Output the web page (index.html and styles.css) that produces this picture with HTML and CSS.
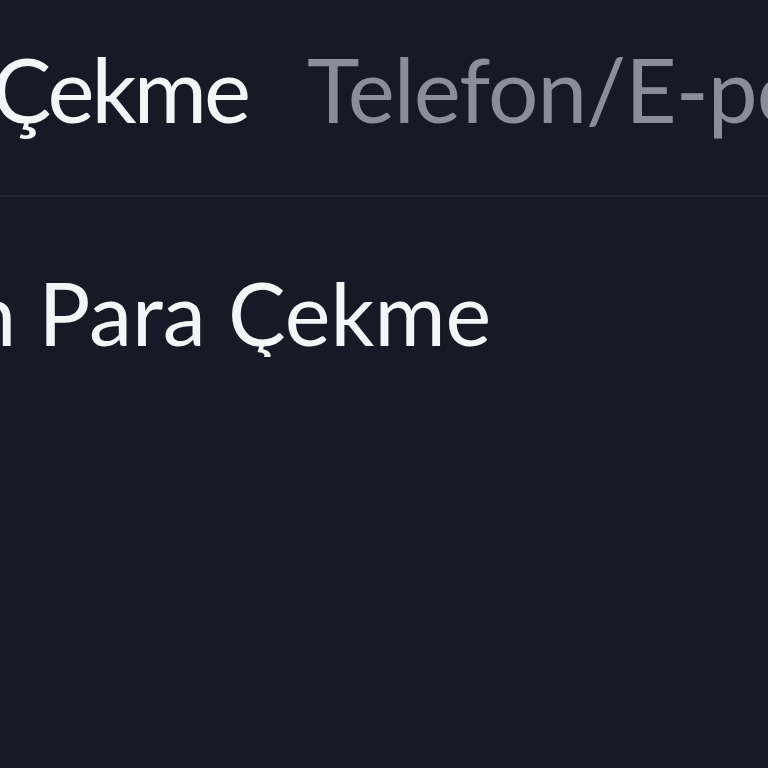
FILE: index.html
```html
<!DOCTYPE html>
<html lang="tr">
<head>
<meta charset="utf-8">
<link rel="stylesheet" href="styles.css">
</head>
<body>
<div class="screen">
  <div class="tabs">
    <span class="tab active">Çekme</span>
    <span class="tab">Telefon/E-posta</span>
  </div>
  <div class="divider"></div>
  <div class="section">
    <span class="title">n Para Çekme</span>
  </div>
</div>
</body>
</html>
```

FILE: styles.css
```css
html, body {
  margin: 0;
  padding: 0;
  background: #161a26;
  width: 768px;
  height: 768px;
  overflow: hidden;
}
.screen {
  font-family: "Lato", "Noto Sans", sans-serif;
  color: #f4f5f7;
  width: 768px;
  overflow: hidden;
}
.tabs {
  display: flex;
  gap: 59px;
  white-space: nowrap;
  height: 195px;
  align-items: flex-start;
  padding-top: 44px;
  box-sizing: border-box;
  margin-left: -8px;
}
.tab {
  font-size: 89px;
  line-height: 1;
  color: #8a8d9c;
  letter-spacing: -1px;
}
.tab.active {
  color: #f4f5f7;
  letter-spacing: -3px;
}
.divider {
  height: 2px;
  background: #232735;
}
.section {
  padding-top: 73px;
  white-space: nowrap;
  margin-left: -32px;
}
.title {
  font-size: 86.5px;
  line-height: 1;
}
```
